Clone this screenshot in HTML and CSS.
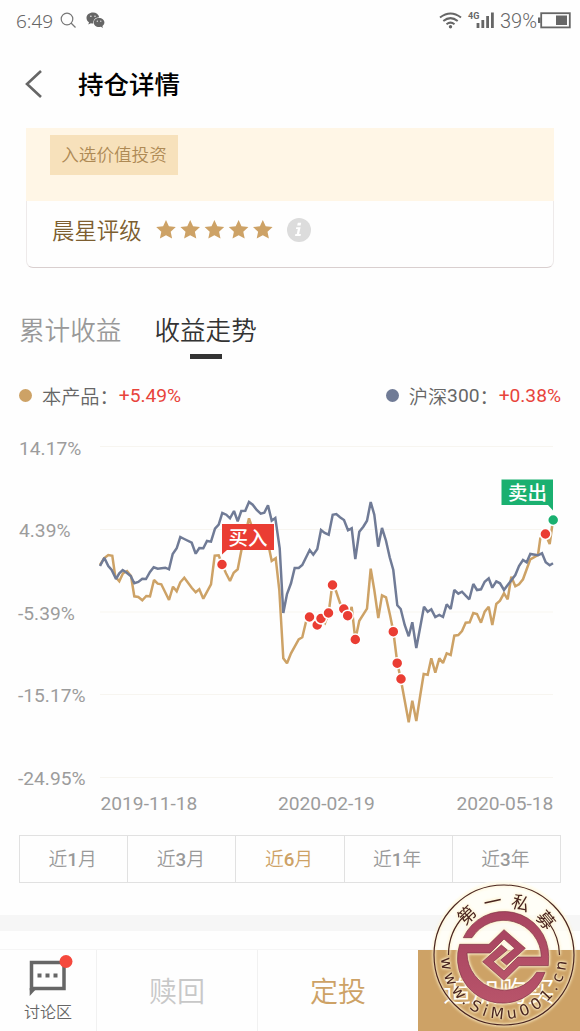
FILE: index.html
```
<!DOCTYPE html>
<html lang="zh-CN">
<head>
    <meta charset="UTF-8">
    <meta name="viewport" content="width=device-width, initial-scale=1.0">
    <title>持仓详情</title>
    <link rel="stylesheet" href="styles.css">
</head>
<body>
    <div class="status-bar">
        <span class="time">6:49</span>
        <svg class="icon-search" width="17" height="17" viewBox="0 0 17 17"><circle cx="7" cy="7" r="5.800"/><path d="M11 11l4.500 4.500"/></svg>
        <svg class="icon-wechat" width="19" height="17" viewBox="0 0 19 17">
            <path d="M7 .5C3.300.5.500 2.800.500 5.900c0 1.800 1 3.300 2.500 4.300l-.7 2.300 2.600-1.300c.7.200 1.500.3 2.300.3C7 8 9.600 5.300 13.200 5.200 12.600 2.500 10.100.5 7 .5z"/>
            <path d="M13 6c-3 0-5.300 1.900-5.300 4.500S10 15 13 15c.7 0 1.300-.1 1.900-.3l2 1.200-.5-1.900c1.200-.8 2-2 2-3.500C18.400 7.900 16 6 13 6z"/>
            <g class="eye"><circle cx="4.900" cy="4.300" r=".7"/><circle cx="9" cy="4.300" r=".7"/><circle cx="11.300" cy="9.200" r=".6"/><circle cx="14.800" cy="9.200" r=".6"/></g>
        </svg>
        <div class="status-right">
            <svg class="icon-wifi" width="23" height="17" viewBox="0 0 23 17">
                <path d="M1 5.500Q11.500-2.500 22 5.500M4.300 9Q11.500 3.200 18.700 9M7.500 12.200Q11.500 9 15.500 12.200"/>
                <circle cx="11.500" cy="14.800" r="1.700"/>
            </svg>
            <svg class="icon-signal" width="28" height="18" viewBox="0 0 28 18">
                <text x="0" y="8">4G</text>
                <path d="M10 12v5M14.800 9v8M19.600 5v12M24.400 1.500V17"/>
            </svg>
            <span class="percent">39%</span>
            <svg class="icon-battery" width="33" height="17" viewBox="0 0 33 17">
                <rect class="shell" x="3.200" y="1.200" width="28.600" height="14.200"/>
                <rect x="0" y="5.500" width="2.500" height="5.500"/>
                <rect x="18" y="3.500" width="11" height="9.500"/>
            </svg>
        </div>
    </div>

    <header class="header">
        <svg class="icon-back" width="18" height="30" viewBox="0 0 18 30"><path d="M16 2L2 15 16 28"/></svg>
        <h1>持仓详情</h1>
    </header>

    <section class="card">
        <div class="card-top"><span class="tag">入选价值投资</span></div>
        <div class="rating">
            <span class="rating-label">晨星评级</span>
            <svg class="stars" width="120" height="22" viewBox="0 0 120 22">
                <defs><path id="star" d="M11 1l2.900 6.200 6.900.8-5.100 4.700 1.400 6.900-6.100-3.400-6.100 3.400 1.400-6.900L1.200 8l6.900-.8z"/></defs>
                <use href="#star"/><use href="#star" x="24.200"/><use href="#star" x="48.400"/><use href="#star" x="72.600"/><use href="#star" x="96.800"/>
            </svg>
            <svg class="icon-info" width="24" height="24" viewBox="0 0 24 24">
                <circle cx="12" cy="12" r="12"/>
                <path d="M10.800 4.800h3.400l-.6 2.700h-3.400zM9.300 9.200h4.300l-1.500 6.800h1.800l-.3 1.900H8l.4-1.900h1.400l1-4.900H8.900z"/>
            </svg>
        </div>
    </section>

    <nav class="tabs">
        <span class="tab">累计收益</span>
        <span class="tab active">收益走势</span>
    </nav>

    <div class="legend">
        <span class="legend-item"><i class="dot gold"></i>本产品：<b>+5.49%</b></span>
        <span class="legend-item"><i class="dot blue"></i>沪深<em>300</em>：<b>+0.38%</b></span>
    </div>

    <svg class="chart" width="580" height="400" viewBox="0 424 580 400">
        <!-- linhas da grade -->
        <path class="grid" d="M100 446.500H553M100 529.500H553M100 612H553M100 694.500H553M100 777.500H553"/>
        <g class="axis">
            <text x="19" y="454.500">14.17%</text>
            <text x="19" y="537">4.39%</text>
            <text x="18" y="619.500">-5.39%</text>
            <text x="18" y="702">-15.17%</text>
            <text x="18" y="785">-24.95%</text>
            <text x="100.500" y="810">2019-11-18</text>
            <text x="278" y="810">2020-02-19</text>
            <text x="456.500" y="810">2020-05-18</text>
        </g>
        <!-- 本产品 -->
        <polyline class="line gold-line" points="100,565 104.300,558 108.300,555 112.300,555.700 115.300,576.700 119.300,581.300 123,573.300 127,571 131,576 134.300,596.300 138.300,597 142.300,600.300 146.300,596 150,596.300 154,580 157.700,583.700 161.300,584.300 169,600 173,586.700 176.700,591.300 180.300,582.300 184.300,577.700 191.700,587.700 195.700,592.300 199.300,589.300 203.300,598.700 211,584.300 214.700,555.700 218.700,555.300 222,564.300 226,573.300 230,581 233.700,572.700 237.700,569.300 241.300,550.700 249,518.300 253,530 260.700,533 268,543 271.700,561 275.700,558.300 279.300,590 283.300,658.300 287,663.300 291,653.300 298.700,639.300 302.300,637.300 306,621.700 309.700,616.700 317.300,625.300 321,618.300 325,623 328.700,612.700 332.300,584.700 336,591 340,603 344,608.700 347.700,615.700 351.700,607 355.300,639.700 359.300,620.700 367,608.700 370.700,568.700 374.300,590 378.300,618 382,595.300 386,597.300 390,615 393.300,631.300 397.300,663 400.700,678.700 408.700,722.300 412.300,700.700 416.300,721 420.300,695 423.700,674 427.700,674.700 431.300,658.300 435.300,672.700 439.300,658.300 443,663 446.700,653.300 450.700,655 454.300,635.700 458.300,635 462,631 465.700,622.700 469.700,622.300 473.300,613 477,614 481,622.700 484.700,611.700 488.700,606.700 492.300,625 496.300,604 500,600.700 504,593.300 507.700,599.300 511.300,576.700 515.300,586.300 519,584.300 523,579.300 530.300,559.300 538,555 540.300,538.300 545.300,534 549.700,544 553,520"/>
        <!-- 沪深300 -->
        <polyline class="line blue-line" points="100,566 104.300,557.700 108.300,566 111.700,570 116,579 119.300,573.300 122.700,570 126.700,572.700 130.700,576 134.300,583.300 138.300,582 142.300,578.700 146,579 150,572 153.700,567.300 157.700,568.700 165.300,567.700 169,569.300 172.700,554 176.700,548.300 180.300,537 184.300,539 191.700,542.700 195.700,553.700 199.300,548 203.300,548.300 207,541 211,541.700 215,528.700 218.700,524.700 222.300,513 226.300,514.700 230,518.300 234,511 237.700,521.300 241.300,511 245.300,510.700 249,502 252.700,504.700 256.700,510 260.700,513.700 264.300,512.700 268,505.300 271.700,520.700 275.300,518 279.700,548.300 283.300,613 287,594 291,583.300 294.700,568 298.700,568 302.300,565 309.700,550 313.300,554.700 317.300,549 321,530 324.700,533 328.700,534.700 332.700,514.700 336.300,514 340,517.300 344,520 348,530.300 351.700,528.300 355.300,559 359.300,531.700 363.300,526.700 367,520.700 370.700,502 374.300,514.700 378.200,546.700 382,528 386,540.700 389.700,557.300 393.300,570 397.300,605.300 400.700,609 404.700,625 408.700,636.300 412.300,622.300 416.300,648 420,628.300 424,606.700 427.700,611.700 431.300,609.300 435.300,617 439.300,615 443,617 446.700,604.300 450.700,609 454.300,590 458.300,593.700 462,591.700 465.700,595.700 469.300,599.300 473.300,584 477,590 481,589.300 484.700,581.700 488.700,578.300 492.300,587.700 496.300,581.300 500,583.300 504,590 507.700,585 515.300,575 519,566 523,560 526.700,562.300 530.300,554 538,555.300 542,553.300 545.700,562.300 549.700,565.300 553,563.300"/>
        <g class="points">
            <circle cx="222" cy="564.500" r="5.500"/>
            <circle cx="309.500" cy="617" r="5.500"/>
            <circle cx="317.200" cy="625" r="5.500"/>
            <circle cx="321" cy="618.500" r="5.500"/>
            <circle cx="328.500" cy="613" r="5.500"/>
            <circle cx="332.500" cy="585" r="5.500"/>
            <circle cx="343.800" cy="609" r="5.500"/>
            <circle cx="347.700" cy="615.700" r="5.500"/>
            <circle cx="355.300" cy="639.500" r="5.500"/>
            <circle cx="393.300" cy="631.700" r="5.500"/>
            <circle cx="397.200" cy="663.200" r="5.500"/>
            <circle cx="401" cy="679" r="5.500"/>
            <circle cx="545.400" cy="534" r="5.500"/>
            <circle class="sell-point" cx="553.200" cy="520" r="5.500"/>
        </g>
        <path class="buy" d="M222 524h52v26h-47l-5 4.500z"/>
        <text class="flag" x="248" y="544.500">买入</text>
        <path class="sell" d="M501.500 479.500H553v31l-5-5.500h-46.500z"/>
        <text class="flag" x="527.500" y="500">卖出</text>
    </svg>

    <div class="ranges">
        <span>近<b>1</b>月</span>
        <span>近<b>3</b>月</span>
        <span class="active">近<b>6</b>月</span>
        <span>近<b>1</b>年</span>
        <span>近<b>3</b>年</span>
    </div>

    <div class="divider"></div>

    <footer class="actions">
        <div class="forum">
            <svg width="44" height="45" viewBox="0 0 44 45">
                <path class="bubble" d="M5.500 7.500h32.500v26H5.500z"/>
                <path class="tail" d="M3.700 33v8l6-6.500z"/>
                <path class="tail" d="M11.500 18.500h4v4h-4zM19.500 18.500h4v4h-4zM27.500 18.500h4v4h-4z"/>
                <circle class="badge" cx="40" cy="6.500" r="6.500"/>
            </svg>
            <span>讨论区</span>
        </div>
        <div class="action disabled">赎回</div>
        <div class="action plan">定投</div>
        <div class="action buy-more">追加购买</div>
    </footer>

    <svg class="stamp" width="152" height="152" viewBox="-76 -76 152 152">
        <defs>
            <path id="stamp-arc" d="M-63 1A63 63 0 0 0 63 1"/>
            <linearGradient id="wine" x1="0" y1="0" x2="0" y2="1"><stop offset="0" stop-color="#a84460"/><stop offset="1" stop-color="#b8546a"/></linearGradient>
        </defs>
        <path class="stamp-back" d="M-70 -5A70 70 0 0 1 70 -5z"/>
        <g class="glow">
            <circle class="ring" r="70"/>
            <path class="ring" d="M-55.500 0A56 56 0 0 1 -40 -39M55.500 0A56 56 0 0 0 45 -32"/>
            <g class="stamp-name">
                <text transform="rotate(-43) translate(0 -48)">第</text>
                <text transform="rotate(-12) translate(0 -48)">一</text>
                <text transform="rotate(18) translate(0 -48)">私</text>
                <text transform="rotate(50) translate(0 -48)">募</text>
            </g>
            <text class="stamp-url"><textPath href="#stamp-arc" startOffset="2" textLength="190">www.SiMu001.cn</textPath></text>
            <g class="emblem" transform="scale(.3333) translate(-250 -260)">
                <path d="M128 208A134 134 0 0 1 384 265L383 292H295L250 336 186 280 242 230 260 245 218 280 250 308 292 266H362A113 113 0 0 0 154 208z"/>
                <path d="M117 228H205L250 184 314 240 258 290 240 275 282 240 250 212 208 254H139A113 113 0 0 0 348 312H373A134 134 0 0 1 117 228z"/>
            </g>
        </g>
    </svg>
</body>
</html>
```
FILE: styles.css
```
body {
    margin: 0;
    width: 580px;
    height: 1031px;
    display: flex;
    flex-direction: column;
    position: relative;
    overflow: hidden;
    background-color: #fefefe;
    color: #666;
    font-family: Roboto, "Noto Sans CJK SC", sans-serif;
    font-weight: 350;
}

svg {
    display: block;
    flex: none;
    overflow: visible;
}

/* Barra de status */
.status-bar {
    display: flex;
    align-items: center;
    height: 40px;
    padding: 0 9px 0 16px;
    box-sizing: border-box;
    color: #666;
    font-size: 20px;
}

.time {
    font-family: "Noto Sans", sans-serif;
    font-size: 19px;
    margin-top: 2px;
}

.icon-search {
    margin-left: 7px;
    fill: none;
    stroke: #777;
    stroke-width: 1.2;
}

.icon-wechat {
    margin-left: 9px;
    fill: #666;
}

.eye {
    fill: #fff;
}

.status-right {
    display: flex;
    align-items: center;
    margin-left: auto;
}

.icon-wifi {
    fill: #666;
}

.icon-wifi path {
    fill: none;
    stroke: #666;
    stroke-width: 2;
}

.icon-signal {
    margin-left: 6px;
    fill: #666;
}

.icon-signal text {
    font-size: 9px;
    font-weight: 700;
}

.icon-signal path {
    stroke: #666;
    stroke-width: 2.8;
}

.percent {
    margin: 2px 1px 0 4px;
}

.icon-battery {
    fill: #666;
}

.shell {
    fill: none;
    stroke: #666;
    stroke-width: 1.8;
}

/* Cabeçalho */
.header {
    display: flex;
    align-items: center;
    gap: 35px;
    height: 88px;
    padding-left: 25px;
}

.icon-back {
    fill: none;
    stroke: #666;
    stroke-width: 2.6;
}

h1 {
    margin: 0 0 4px;
    color: #000;
    font-size: 25.5px;
    font-weight: 500;
}

/* Cartão de avaliação */
.card {
    margin: 0 26px;
    height: 140px;
    box-sizing: border-box;
    border: 1px solid #eeeaea;
    border-top: none;
    border-bottom: 1.5px solid #d9cfcf;
    border-radius: 0 0 7px 7px;
}

.card-top {
    height: 73px;
    margin: 0 -1px;
    padding: 7px 24px 0;
    box-sizing: border-box;
    background-color: #fff6e6;
}

.tag {
    display: block;
    width: 128px;
    height: 40px;
    line-height: 40px;
    text-align: center;
    background-color: #f7e1bb;
    color: #ae8a55;
    font-size: 17.6px;
}

.rating {
    display: flex;
    align-items: center;
    height: 58px;
    padding-left: 25px;
}

.rating-label {
    margin-bottom: 3px;
    color: #7d5e30;
    font-size: 22.4px;
}

.stars {
    margin-left: 13px;
    fill: #cda266;
}

.icon-info {
    margin-left: 12px;
    fill: #dcdcdc;
}

.icon-info path {
    fill: #fff;
}

/* Abas */
.tabs {
    display: flex;
    gap: 33px;
    height: 59px;
    margin-top: 32px;
    padding-left: 19px;
}

.tab {
    display: flex;
    flex-direction: column;
    align-items: center;
    height: 59px;
    line-height: 63px;
    color: #999;
    font-size: 25.6px;
}

.tab.active {
    color: #333;
}

.tab.active::after {
    content: "";
    width: 32px;
    height: 5px;
    margin-top: -9px;
    flex: none;
    background-color: #333;
}

/* Legenda */
.legend {
    display: flex;
    justify-content: space-between;
    align-items: center;
    height: 65px;
    padding: 8px 19px 0;
    box-sizing: border-box;
    font-size: 19.2px;
}

.legend-item {
    display: flex;
    align-items: center;
    white-space: pre;
}

.legend em {
    font-style: normal;
    font-weight: 400;
}

.legend b {
    color: #e8443c;
    font-weight: 400;
}

.dot {
    width: 13px;
    height: 13px;
    margin-right: 10px;
    border-radius: 50%;
}

.gold {
    background-color: #cda266;
}

.blue {
    background-color: #707b96;
}

/* Gráfico */
.grid {
    fill: none;
    stroke: #f7f5f0;
    stroke-width: 1.2;
}

.axis {
    fill: #9c9c9c;
    font-size: 19.2px;
    font-weight: 400;
}

.line {
    fill: none;
    stroke-width: 2.5;
    stroke-linejoin: miter;
    stroke-miterlimit: 2;
}

.gold-line {
    stroke: #cda266;
}

.blue-line {
    stroke: #707b96;
}

.points {
    fill: #ea3d33;
    stroke: #fff;
    stroke-width: 1.5;
}

.sell-point,
.sell {
    fill: #1ab070;
}

.buy {
    fill: #ea3d33;
}

.flag {
    fill: #fff;
    font-size: 19.5px;
    font-weight: 500;
    text-anchor: middle;
}

/* Períodos */
.ranges {
    display: flex;
    height: 48px;
    margin: 11px 19px 0;
    box-sizing: border-box;
    border: 1px solid #e1e1e1;
}

.ranges span {
    flex: 1;
    padding-right: 2px;
    line-height: 49px;
    text-align: center;
    color: #999;
    font-size: 18.8px;
}

.ranges span + span {
    border-left: 1px solid #e1e1e1;
}

.ranges b {
    font-weight: 500;
}

.ranges .active {
    color: #cda266;
}

.divider {
    height: 16px;
    margin-top: 32px;
    flex: none;
    background-color: #f6f6f6;
}

/* Rodapé */
.actions {
    display: flex;
    height: 82px;
    margin-top: auto;
    box-sizing: border-box;
    border-top: 1px solid #f5f5f5;
}

.forum {
    width: 96px;
    padding-top: 5px;
    box-sizing: border-box;
    display: flex;
    flex-direction: column;
    align-items: center;
    font-size: 16px;
}

.forum span {
    line-height: 25px;
}

.bubble {
    fill: none;
    stroke: #666;
    stroke-width: 3.5;
}

.tail {
    fill: #666;
}

.badge {
    fill: #f5493d;
}

.action {
    width: 161px;
    box-sizing: border-box;
    border-left: 1px solid #f1f1f1;
    line-height: 85px;
    text-align: center;
    font-size: 28px;
}

.disabled {
    color: #c8c8c8;
}

.plan {
    color: #cda266;
}

.buy-more {
    flex: 1;
    border: none;
    background-color: #cda266;
    color: #fff;
}

/* Selo sobre o rodapé */
.stamp {
    position: absolute;
    left: 427.5px;
    top: 879px;
    fill: #4a2520;
}

.stamp-back {
    fill: #fffdf2;
    opacity: .65;
}

.glow {
    filter: drop-shadow(0 0 1.5px #fff3cf) drop-shadow(0 0 1px #fff3cf);
}

.ring {
    fill: none;
    stroke: #4a2520;
    stroke-width: 1.2;
}

.stamp-name {
    font-size: 18px;
    font-weight: 400;
    text-anchor: middle;
}

.stamp-url {
    font-family: "DejaVu Sans", sans-serif;
    font-size: 15.5px;
    font-weight: 400;
}

.emblem {
    fill: url(#wine);
    stroke: #7b3044;
    stroke-width: 2;
}
```
